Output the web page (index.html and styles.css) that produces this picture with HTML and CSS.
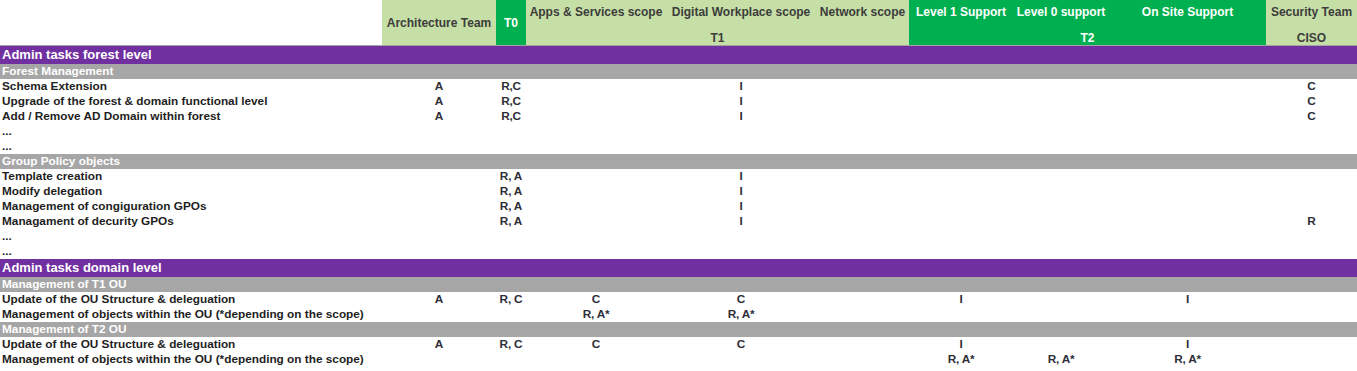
FILE: index.html
```html
<!DOCTYPE html>
<html>
<head>
<meta charset="utf-8">
<link rel="stylesheet" href="styles.css">
</head>
<body>
<div class="sheet">
  <div class="head grid">
    <div class="h blank r2"></div>
    <div class="h lg r2 c2">Architecture Team</div>
    <div class="h dg r2 c3">T0</div>
    <div class="h lg c4 top">Apps &amp; Services scope</div>
    <div class="h lg c5 top">Digital Workplace scope</div>
    <div class="h lg c6 top">Network scope</div>
    <div class="h dg c7 top">Level 1 Support</div>
    <div class="h dg c8 top">Level 0 support</div>
    <div class="h dg c9 top">On Site Support</div>
    <div class="h lg c10 top">Security Team</div>
    <div class="h lg t1">T1</div>
    <div class="h dg t2">T2</div>
    <div class="h lg c10 bot">CISO</div>
  </div>

  <div class="section">Admin tasks forest level</div>
  <div class="group">Forest Management</div>
  <div class="row grid"><div class="lbl">Schema Extension</div><div>A</div><div>R,C</div><div></div><div>I</div><div></div><div></div><div></div><div></div><div>C</div></div>
  <div class="row grid"><div class="lbl">Upgrade of the forest &amp; domain functional level</div><div>A</div><div>R,C</div><div></div><div>I</div><div></div><div></div><div></div><div></div><div>C</div></div>
  <div class="row grid"><div class="lbl">Add / Remove AD Domain within forest</div><div>A</div><div>R,C</div><div></div><div>I</div><div></div><div></div><div></div><div></div><div>C</div></div>
  <div class="row grid"><div class="lbl">...</div></div>
  <div class="row grid"><div class="lbl">...</div></div>
  <div class="group">Group Policy objects</div>
  <div class="row grid"><div class="lbl">Template creation</div><div></div><div>R, A</div><div></div><div>I</div></div>
  <div class="row grid"><div class="lbl">Modify delegation</div><div></div><div>R, A</div><div></div><div>I</div></div>
  <div class="row grid"><div class="lbl">Management of congiguration GPOs</div><div></div><div>R, A</div><div></div><div>I</div></div>
  <div class="row grid"><div class="lbl">Managament of decurity GPOs</div><div></div><div>R, A</div><div></div><div>I</div><div></div><div></div><div></div><div></div><div>R</div></div>
  <div class="row grid"><div class="lbl">...</div></div>
  <div class="row grid"><div class="lbl">...</div></div>

  <div class="section">Admin tasks domain level</div>
  <div class="group">Management of T1 OU</div>
  <div class="row grid"><div class="lbl">Update of the OU Structure &amp; deleguation</div><div>A</div><div>R, C</div><div>C</div><div>C</div><div></div><div>I</div><div></div><div>I</div><div></div></div>
  <div class="row grid"><div class="lbl">Management of objects within the OU (*depending on the scope)</div><div></div><div></div><div>R, A*</div><div>R, A*</div></div>
  <div class="group">Management of T2 OU</div>
  <div class="row grid"><div class="lbl">Update of the OU Structure &amp; deleguation</div><div>A</div><div>R, C</div><div>C</div><div>C</div><div></div><div>I</div><div></div><div>I</div><div></div></div>
  <div class="row grid"><div class="lbl">Management of objects within the OU (*depending on the scope)</div><div></div><div></div><div></div><div></div><div></div><div>R, A*</div><div>R, A*</div><div>R, A*</div><div></div></div>
</div>
</body>
</html>
```

FILE: styles.css
```css
html, body {
  margin: 0;
  padding: 0;
  background: #ffffff;
}

.sheet {
  width: 1357px;
  font-family: "Liberation Sans", Arial, sans-serif;
  font-weight: bold;
  font-size: 11.8px;
  color: #222222;
}

.grid {
  display: grid;
  grid-template-columns: 382px 114px 30px 140px 150px 93px 104px 96px 157px 91px;
}

.head {
  grid-template-rows: 23px 22px;
  border-bottom: 1px solid #a3a3a3;
}

.h {
  display: flex;
  align-items: center;
  justify-content: center;
  white-space: nowrap;
  font-size: 12px;
}

.h.r2 { padding-top: 1px; }
.h.top { padding-top: 1px; }
.h.bot { padding-top: 8px; }

.blank { background: #ffffff; grid-column: 1; }
.lg { background: #c6dfa6; color: #3c3c3c; }
.dg { background: #00b050; color: #ffffff; }

.r2 { grid-row: 1 / span 2; }
.c2 { grid-column: 2; }
.c3 { grid-column: 3; }
.c4 { grid-column: 4; grid-row: 1; }
.c5 { grid-column: 5; grid-row: 1; }
.c6 { grid-column: 6; grid-row: 1; }
.c7 { grid-column: 7; grid-row: 1; }
.c8 { grid-column: 8; grid-row: 1; }
.c9 { grid-column: 9; grid-row: 1; }
.c10 { grid-column: 10; }
.c10.top { grid-row: 1; }
.c10.bot { grid-row: 2; }
.t1 { grid-column: 4 / span 3; grid-row: 2; padding-top: 8px; }
.t2 { grid-column: 7 / span 3; grid-row: 2; padding-top: 8px; }

.section {
  height: 18px;
  line-height: 18px;
  background: #7030a0;
  color: #ffffff;
  font-size: 13px;
  padding-left: 2px;
  white-space: nowrap;
}

.group {
  height: 15px;
  line-height: 15px;
  background: #a6a6a6;
  color: #ffffff;
  padding-left: 2px;
  white-space: nowrap;
}

.row {
  height: 15px;
  line-height: 15px;
}

.row > div {
  text-align: center;
  white-space: nowrap;
  color: #2e2e38;
  letter-spacing: -0.2px;
}

.row > .lbl {
  text-align: left;
  padding-left: 2px;
  color: #1e1e1e;
  letter-spacing: 0;
}
```
